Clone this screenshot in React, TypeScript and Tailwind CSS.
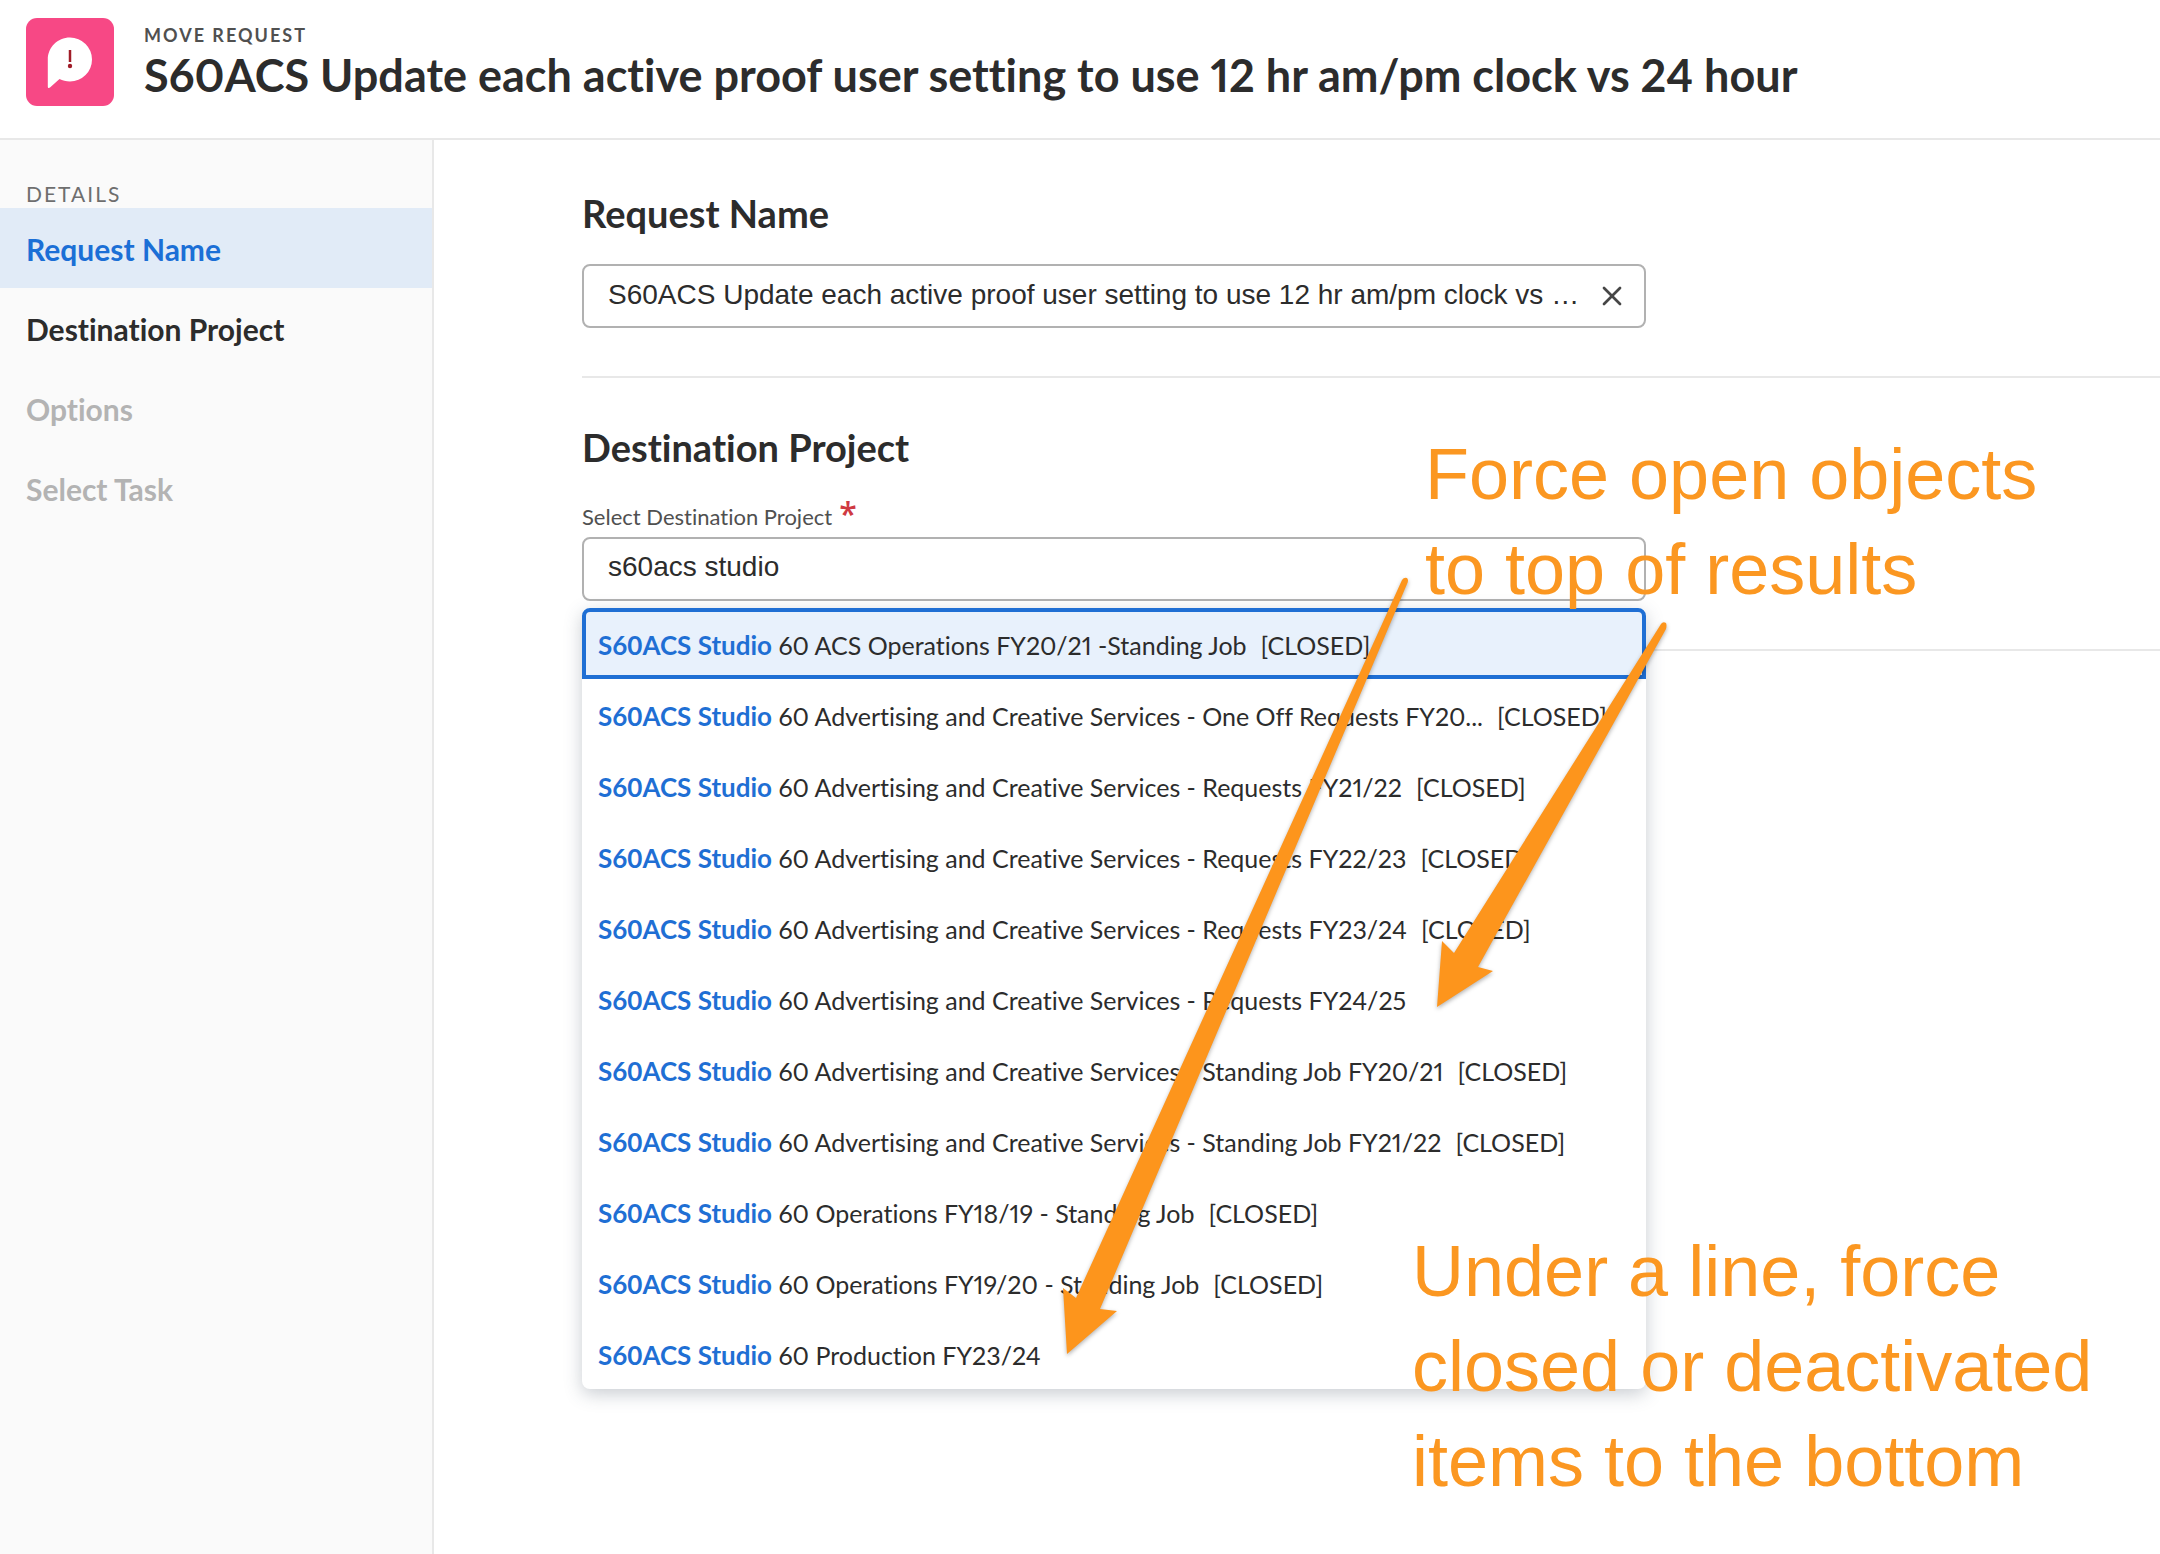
import { X } from 'lucide-react';

interface ProjectOption {
  name: string;
  closed: boolean;
}

const steps = [
  { label: 'Request Name', style: 'bg-[#e1ebf7] text-[#1b6fd6]' },
  { label: 'Destination Project', style: 'text-[#2c2c2c]' },
  { label: 'Options', style: 'text-[#b3b3b3]' },
  { label: 'Select Task', style: 'text-[#b3b3b3]' },
];

const options: ProjectOption[] = [
  { name: '60 ACS Operations FY20/21 -Standing Job', closed: true },
  { name: '60 Advertising and Creative Services - One Off Requests FY20...', closed: true },
  { name: '60 Advertising and Creative Services - Requests FY21/22', closed: true },
  { name: '60 Advertising and Creative Services - Requests FY22/23', closed: true },
  { name: '60 Advertising and Creative Services - Requests FY23/24', closed: true },
  { name: '60 Advertising and Creative Services - Requests FY24/25', closed: false },
  { name: '60 Advertising and Creative Services - Standing Job FY20/21', closed: true },
  { name: '60 Advertising and Creative Services - Standing Job FY21/22', closed: true },
  { name: '60 Operations FY18/19 - Standing Job', closed: true },
  { name: '60 Operations FY19/20 - Standing Job', closed: true },
  { name: '60 Production FY23/24', closed: false },
];

function Header() {
  return (
    <header className="flex h-[140px] items-start gap-[30px] border-b-2 border-[#e8e8e8] px-[26px] pt-[18px]">
      <svg viewBox="0 0 88 88" className="size-[88px] shrink-0">
        <rect width="88" height="88" rx="11" fill="#f74885" />
        <path
          d="M44 19.500a22 22 0 1 1 0 44c-4 0-7.500-1-10.500-2.500L24 69.600c-1 .8-2.200.5-2.200-.8V41.500C21.800 29.500 31.500 19.500 44 19.500z"
          fill="#fff"
        />
        <path d="M44 32v12" stroke="#a01c28" strokeWidth="2.500" />
        <circle cx="44" cy="48" r="2.200" fill="#a01c28" />
      </svg>
      <div>
        <p className="text-[18px] leading-[34px] font-bold tracking-[2px] text-[#505050]">MOVE REQUEST</p>
        <h1 className="text-[45px] leading-[46px] font-bold text-[#2c2c2c]">
          S60ACS Update each active proof user setting to use 12 hr am/pm clock vs 24 hour
        </h1>
      </div>
    </header>
  );
}

function Sidebar() {
  return (
    <nav className="w-[434px] shrink-0 border-r-2 border-[#e8e8e8] bg-[#fafafa] pt-9">
      <h2 className="px-[26px] pt-1 text-[21px] leading-7 tracking-[2px] text-[#6e6e6e]">DETAILS</h2>
      {steps.map((step) => (
        <button
          key={step.label}
          className={`block h-20 w-full px-[26px] pt-0.5 text-left text-[30px] font-bold ${step.style}`}
        >
          {step.label}
        </button>
      ))}
    </nav>
  );
}

function ProjectList() {
  return (
    <ul
      role="listbox"
      className="absolute top-full left-0 z-10 mt-[7px] w-full rounded-lg bg-white shadow-[0_5px_18px_rgba(60,75,95,0.28)]"
    >
      {options.map((option, i) => (
        <li
          key={option.name}
          role="option"
          aria-selected={i === 0}
          className={`flex h-[71px] items-center gap-[14px] pt-1 text-[25px] whitespace-nowrap text-[#2c2c2c] ${
            i === 0 ? 'rounded-t-lg border-4 border-[#1f6fd4] bg-[#e8f1fc] px-3' : 'px-4'
          }`}
        >
          <span>
            <strong className="text-[26px] font-bold text-[#1f6fd4] normal-nums">S60ACS Studio</strong> {option.name}
          </span>
          {option.closed && <span>[CLOSED]</span>}
        </li>
      ))}
    </ul>
  );
}

function Annotations() {
  return (
    <>
      <p className="pointer-events-none absolute top-[427px] left-[1425px] z-20 font-['Liberation_Sans',Arial,sans-serif] text-[72px] leading-[95px] whitespace-nowrap text-[#fb9721]">
        Force open objects
        <br />
        to top of results
      </p>
      <p className="pointer-events-none absolute top-[1224px] left-[1412px] z-20 font-['Liberation_Sans',Arial,sans-serif] text-[72px] leading-[95px] whitespace-nowrap text-[#fb9721]">
        Under a line, force
        <br />
        closed or deactivated
        <br />
        items to the bottom
      </p>
      <svg
        viewBox="0 0 2160 1554"
        className="pointer-events-none absolute top-0 left-0 z-20 h-[1554px] w-[2160px] drop-shadow-[0_2px_2px_rgba(0,0,0,0.3)]"
        fill="#fd951c"
      >
        <path d="M1402 580Q1404 577 1407 578Q1409 580 1407 584L1100 1309L1117 1311L1067 1354L1063 1288L1076 1298Z" />
        <path d="M1661 624Q1663 621 1666 623Q1667 625 1666 629L1478 967L1493 971L1437 1007L1442 941L1454 953Z" />
      </svg>
    </>
  );
}

export default function App() {
  return (
    <div className="relative flex min-h-screen flex-col overflow-hidden bg-white font-[Lato,'Noto_Sans',sans-serif] proportional-nums [font-variant-ligatures:none]">
      <Header />
      <div className="flex grow">
        <Sidebar />
        <main className="grow pl-[148px]">
          <section className="border-b-2 border-[#e8e8e8] pt-12 pb-12">
            <h2 className="text-[38px] leading-[50px] font-bold text-[#2c2c2c]">
              <label htmlFor="request-name">Request Name</label>
            </h2>
            <div className="mt-[26px] flex h-16 w-[1064px] items-center rounded-lg border-2 border-[#b1b1b1] pr-4 pl-6">
              <input
                id="request-name"
                defaultValue="S60ACS Update each active proof user setting to use 12 hr am/pm clock vs …"
                className="h-full min-w-0 grow pb-0.5 font-['Liberation_Sans',Arial,sans-serif] text-[28px] text-[#2c2c2c] outline-none"
              />
              <button aria-label="Clear request name">
                <X className="size-8 text-[#464646]" strokeWidth={2} />
              </button>
            </div>
          </section>

          <section className="border-b-2 border-[#e8e8e8] pt-11 pb-12">
            <h2 className="text-[38px] leading-[50px] font-bold text-[#2c2c2c]">Destination Project</h2>
            <label htmlFor="project" className="mt-[26px] flex h-[39px] gap-[7px] text-[22px] leading-[38px] text-[#505050]">
              Select Destination Project
              <span className="font-['Open_Sans',sans-serif] text-[32px] leading-8 font-semibold text-[#cf3a42]">
                *
              </span>
            </label>
            <div className="relative w-[1064px]">
              <input
                id="project"
                defaultValue="s60acs studio"
                className="block h-16 w-full rounded-lg border-2 border-[#b1b1b1] px-6 pb-1 font-['Liberation_Sans',Arial,sans-serif] text-[28px] text-[#2c2c2c] outline-none"
              />
              <ProjectList />
            </div>
          </section>
        </main>
      </div>
      <Annotations />
    </div>
  );
}
